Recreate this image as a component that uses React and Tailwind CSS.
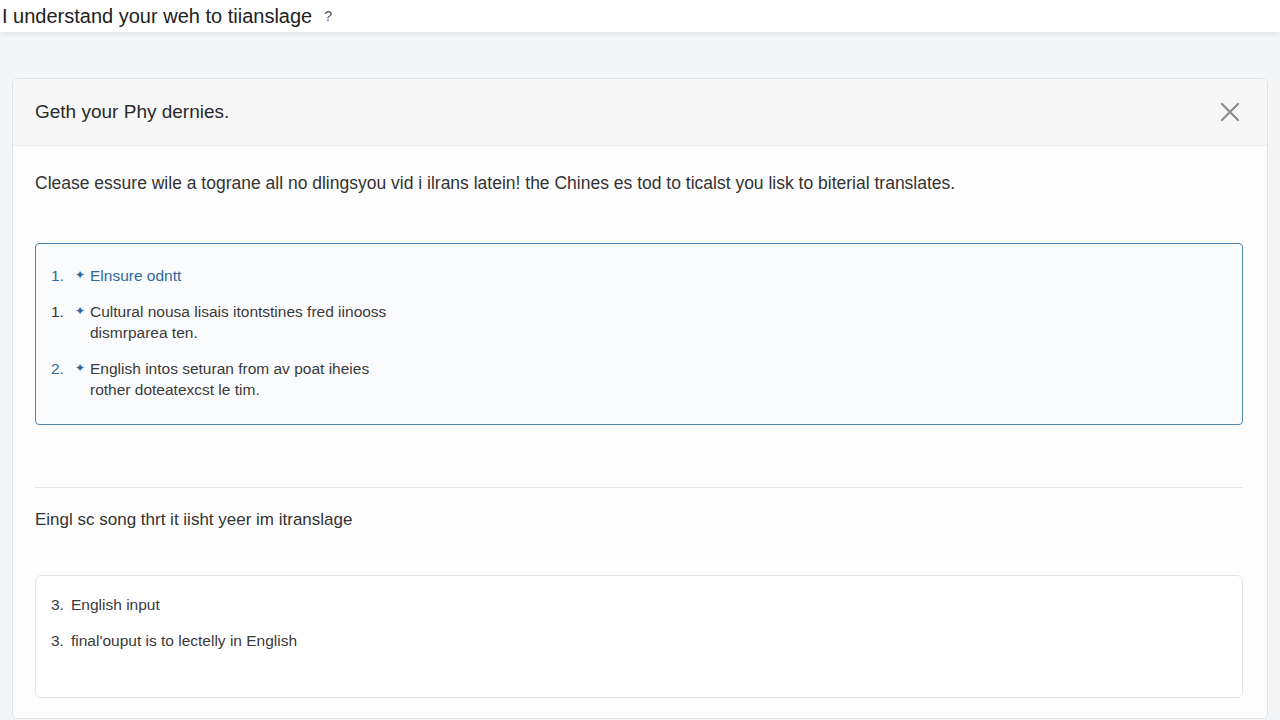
export default function App() {
    const font = { fontFamily: '"Liberation Sans", Arial, sans-serif' };

    return (
        <div className="w-[1280px] h-[720px] overflow-hidden bg-[#f3f5f7] text-[#2b2b2b]" style={font}>
            {/* top bar */}
            <div className="h-[32px] bg-white shadow-[0_2px_6px_rgba(0,0,0,0.08)] flex items-center pl-[2px]">
                <span className="text-[20px] text-[#222]">I understand your weh to tiianslage</span>
                <span className="ml-[12px] text-[14px] text-[#555]">?</span>
            </div>

            <div className="px-[12px] pt-[46px]">
                <div className="rounded-[6px] border border-[#dfe2e6] bg-white overflow-hidden">
                    {/* header */}
                    <div className="h-[67px] bg-[#f7f7f7] border-b border-[#eceef0] flex items-center justify-between pl-[22px] pr-[26px]">
                        <h2 className="text-[19px] text-[#2a2a2a]">Geth your Phy dernies.</h2>
                        <svg width="22" height="22" viewBox="0 0 22 22" className="text-[#8a8d90]">
                            <path d="M3 3L19 19M19 3L3 19" stroke="currentColor" strokeWidth="2.2" strokeLinecap="round" />
                        </svg>
                    </div>

                    {/* body */}
                    <div className="pl-[22px] pr-[24px] pt-[24px] pb-[20px] bg-[#fdfdfd]">
                        <p className="text-[17.5px] text-[#333]">
                            Clease essure wile a tograne all no dlingsyou vid i ilrans latein! the Chines es tod to ticalst you lisk to biterial translates.
                        </p>

                        <div className="mt-[47px] h-[182px] rounded-[4px] border border-[#4f86ad] bg-[#fafbfc] pl-[15px] pt-[21px]">
                            <ol className="flex flex-col gap-[15px] text-[15.5px] leading-[21px]">
                                <li className="flex text-[#2f6a9e]">
                                    <span className="w-[24px]">1.</span>
                                    <span className="w-[15px] text-[12px]">✦</span>
                                    <span>Elnsure odntt</span>
                                </li>
                                <li className="flex">
                                    <span className="w-[24px] text-[#333]">1.</span>
                                    <span className="w-[15px] text-[12px] text-[#2f6a9e]">✦</span>
                                    <span className="text-[#3a3a3a]">
                                        Cultural nousa lisais itontstines fred iinooss
                                        <br />
                                        dismrparea ten.
                                    </span>
                                </li>
                                <li className="flex">
                                    <span className="w-[24px] text-[#2f6a9e]">2.</span>
                                    <span className="w-[15px] text-[12px] text-[#2f6a9e]">✦</span>
                                    <span className="text-[#3a3a3a]">
                                        English intos seturan from av poat iheies
                                        <br />
                                        rother doteatexcst le tim.
                                    </span>
                                </li>
                            </ol>
                        </div>

                        <hr className="mt-[62px] border-0 border-t border-[#e2e4e7]" />

                        <p className="mt-[19px] text-[17px] text-[#333]">Eingl sc song thrt it iisht yeer im itranslage</p>

                        <div className="mt-[42px] h-[123px] rounded-[6px] border border-[#e0e3e7] bg-white pl-[15px] pt-[18px]">
                            <ol className="flex flex-col gap-[15px] text-[15.5px] leading-[21px] text-[#3a3a3a]">
                                <li className="flex">
                                    <span className="w-[20px]">3.</span>
                                    <span>English input</span>
                                </li>
                                <li className="flex">
                                    <span className="w-[20px]">3.</span>
                                    <span>final'ouput is to lectelly in English</span>
                                </li>
                            </ol>
                        </div>
                    </div>
                </div>
            </div>
        </div>
    );
}
